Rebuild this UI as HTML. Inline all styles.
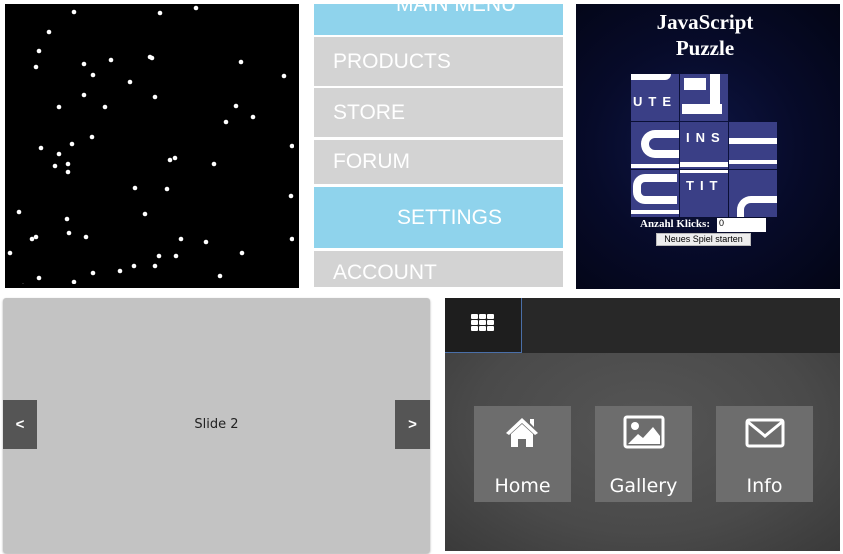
<!DOCTYPE html>
<html><head><meta charset="utf-8"><style>
*{margin:0;padding:0;box-sizing:border-box}
body{width:843px;height:554px;background:#fff;position:relative;overflow:hidden;font-family:"Liberation Sans",sans-serif}
.a{position:absolute}
.m{position:absolute;left:314px;width:249px;background:#d3d3d3;color:#fff;font-size:21px;padding-left:19px;display:flex;align-items:center}
.b{background:#8fd3ec;justify-content:center;padding-left:22px}
.t{position:absolute;width:48px;height:47px;background:#3a3f86;overflow:hidden;color:#fff;font-weight:bold;font-size:13px;letter-spacing:6px}
.tile{position:absolute;top:406px;width:97px;height:96px;background:#6d6d6d;color:#fff;font-family:"DejaVu Sans",sans-serif;font-size:19px;text-align:center}
.tile span{position:absolute;left:0;right:0;top:69px}
.tile svg{position:absolute;left:28px;top:8px}
</style></head><body>
<div class="a" style="left:5px;top:4px;width:294px;height:284px;background:#000">
<svg width="294" height="284" style="position:absolute;left:-5px;top:-4px" fill="#fff">
<g>
<circle cx="74" cy="12" r="2.3"/><circle cx="160" cy="13" r="2.3"/><circle cx="196" cy="8" r="2.3"/><circle cx="49" cy="32" r="2.3"/><circle cx="298" cy="48" r="2.3"/><circle cx="39" cy="51" r="2.3"/><circle cx="150" cy="57" r="2.3"/><circle cx="152" cy="58" r="2.3"/><circle cx="111" cy="60" r="2.3"/><circle cx="241" cy="62" r="2.3"/><circle cx="84" cy="64" r="2.3"/><circle cx="36" cy="67" r="2.3"/><circle cx="93" cy="75" r="2.3"/><circle cx="284" cy="76" r="2.3"/><circle cx="130" cy="82" r="2.3"/><circle cx="84" cy="95" r="2.3"/><circle cx="155" cy="97" r="2.3"/><circle cx="59" cy="107" r="2.3"/><circle cx="105" cy="107" r="2.3"/><circle cx="236" cy="106" r="2.3"/><circle cx="253" cy="117" r="2.3"/><circle cx="226" cy="122" r="2.3"/><circle cx="92" cy="137" r="2.3"/><circle cx="41" cy="148" r="2.3"/><circle cx="72" cy="144" r="2.3"/><circle cx="292" cy="146" r="2.3"/><circle cx="59" cy="154" r="2.3"/><circle cx="170" cy="160" r="2.3"/><circle cx="175" cy="158" r="2.3"/><circle cx="68" cy="164" r="2.3"/><circle cx="55" cy="166" r="2.3"/><circle cx="214" cy="164" r="2.3"/><circle cx="68" cy="172" r="2.3"/><circle cx="135" cy="188" r="2.3"/><circle cx="167" cy="189" r="2.3"/><circle cx="291" cy="196" r="2.3"/><circle cx="19" cy="212" r="2.3"/><circle cx="145" cy="214" r="2.3"/><circle cx="67" cy="219" r="2.3"/><circle cx="69" cy="233" r="2.3"/><circle cx="32" cy="239" r="2.3"/><circle cx="36" cy="237" r="2.3"/><circle cx="86" cy="237" r="2.3"/><circle cx="181" cy="239" r="2.3"/><circle cx="206" cy="242" r="2.3"/><circle cx="292" cy="239" r="2.3"/><circle cx="10" cy="253" r="2.3"/><circle cx="159" cy="256" r="2.3"/><circle cx="176" cy="256" r="2.3"/><circle cx="242" cy="253" r="2.3"/><circle cx="134" cy="266" r="2.3"/><circle cx="155" cy="266" r="2.3"/><circle cx="93" cy="273" r="2.3"/><circle cx="120" cy="271" r="2.3"/><circle cx="39" cy="278" r="2.3"/><circle cx="220" cy="276" r="2.3"/><circle cx="74" cy="282" r="2.3"/><circle cx="23" cy="286" r="2.3"/><circle cx="261" cy="287" r="2.3"/>
</g></svg></div>

<div class="m b" style="top:4px;height:31px;overflow:hidden;display:block"><span style="position:absolute;left:82px;top:-11px;line-height:24px">MAIN MENU</span></div>
<div class="m" style="top:37px;height:49px">PRODUCTS</div>
<div class="m" style="top:88px;height:49px">STORE</div>
<div class="m" style="top:140px;height:44px">FORUM</div>
<div class="m b" style="top:187px;height:61px">SETTINGS</div>
<div class="m" style="top:251px;height:36px;align-items:flex-end;padding-bottom:2px">ACCOUNT</div>

<div class="a" style="left:576px;top:4px;width:264px;height:285px;background:radial-gradient(ellipse at 45% 50%,#0e1645 0%,#070b2a 50%,#030515 100%)">
<div class="a" style="left:0;width:258px;top:5px;text-align:center;color:#fff;font-family:'Liberation Serif',serif;font-weight:bold;font-size:21px;line-height:26px">JavaScript<br>Puzzle</div>
<div class="t" style="left:55px;top:70px"><span style="position:absolute;left:2px;top:20px">UTE</span><div class="a" style="left:0;top:0;width:40px;height:6px;background:#fff;border-radius:0 0 8px 0"></div></div>
<div class="t" style="left:104px;top:70px"><div class="a" style="left:4px;top:4px;width:22px;height:12px;background:#fff"></div><div class="a" style="left:2px;top:30px;width:40px;height:10px;background:#fff"></div><div class="a" style="left:30px;top:0;width:10px;height:38px;background:#fff"></div></div>
<div class="t" style="left:55px;top:118px"><div class="a" style="left:10px;top:8px;width:40px;height:28px;border:8px solid #fff;border-right:none;border-radius:18px 0 0 18px"></div><div class="a" style="left:0;top:42px;width:48px;height:4px;background:#fff"></div></div>
<div class="t" style="left:104px;top:118px"><span style="position:absolute;left:6px;top:8px">INS</span><div class="a" style="left:0;top:40px;width:48px;height:5px;background:#fff"></div></div>
<div class="t" style="left:153px;top:118px"><div class="a" style="left:0;top:16px;width:48px;height:6px;background:#fff"></div><div class="a" style="left:0;top:38px;width:48px;height:4px;background:#fff"></div></div>
<div class="t" style="left:55px;top:166px"><div class="a" style="left:2px;top:4px;width:44px;height:30px;border:8px solid #fff;border-right:none;border-radius:12px 0 0 12px"></div><div class="a" style="left:0;top:40px;width:48px;height:4px;background:#fff"></div></div>
<div class="t" style="left:104px;top:166px"><span style="position:absolute;left:6px;top:8px">TIT</span><div class="a" style="left:0;top:0;width:48px;height:3px;background:#fff"></div></div>
<div class="t" style="left:153px;top:166px"><div class="a" style="left:8px;top:26px;width:50px;height:30px;border:7px solid #fff;border-right:none;border-bottom:none;border-radius:14px 0 0 0"></div></div>
<div class="a" style="left:64px;top:214px;color:#fff;font-family:'Liberation Serif',serif;font-weight:bold;font-size:11px">Anzahl Klicks:</div>
<div class="a" style="left:141px;top:214px;width:49px;height:14px;background:#fff;font-size:9px;padding-left:2px;color:#000">0</div>
<div class="a" style="left:80px;top:229px;width:95px;height:13px;background:#eee;border:1px solid #bbb;font-size:9px;text-align:center;line-height:11px;color:#000">Neues Spiel starten</div>
</div>

<div class="a" style="left:3px;top:298px;width:427px;height:255px;background:#c3c3c3;border-radius:3px;box-shadow:0 1px 2px #aaa">
<div class="a" style="left:0;right:0;top:119px;text-align:center;font-family:'DejaVu Sans',sans-serif;font-size:13px;color:#222">Slide 2</div>
<div class="a" style="left:0;top:102px;width:34px;height:49px;background:#555;color:#fff;font-weight:bold;font-size:15px;text-align:center;line-height:49px">&lt;</div>
<div class="a" style="left:392px;top:102px;width:35px;height:49px;background:#555;color:#fff;font-weight:bold;font-size:15px;text-align:center;line-height:49px">&gt;</div>
</div>

<div class="a" style="left:445px;top:298px;width:395px;height:253px;background:radial-gradient(ellipse at 50% 50%,#555 0%,#4a4a4a 60%,#3a3a3a 100%)">
<div class="a" style="left:0;top:0;width:395px;height:55px;background:#282828"></div>
<div class="a" style="left:0;top:0;width:77px;height:55px;background:#1e1e1e;border-right:1px solid #4a6fa8;border-bottom:1px solid #4a6fa8"></div>
<svg class="a" style="left:26px;top:16px" width="24" height="18" fill="#fff"><rect x="0" y="0" width="7" height="5" rx="1"/><rect x="8" y="0" width="7" height="5" rx="1"/><rect x="16" y="0" width="7" height="5" rx="1"/><rect x="0" y="6" width="7" height="5" rx="1"/><rect x="8" y="6" width="7" height="5" rx="1"/><rect x="16" y="6" width="7" height="5" rx="1"/><rect x="0" y="12" width="7" height="5" rx="1"/><rect x="8" y="12" width="7" height="5" rx="1"/><rect x="16" y="12" width="7" height="5" rx="1"/></svg>
</div>
<div class="tile" style="left:474px"><svg width="40" height="36" viewBox="0 0 40 36"><path d="M20 4 L36 19 L33 21 L20 9 L7 21 L4 19 Z M28 5 h4 v8 l-4-4Z" fill="#fff"/><path d="M9 20 L20 10 L31 20 V33 H24 V25 H16 V33 H9Z" fill="#fff"/></svg><span>Home</span></div>
<div class="tile" style="left:595px"><svg width="42" height="36" viewBox="0 0 42 36"><rect x="2" y="3" width="38" height="30" fill="none" stroke="#fff" stroke-width="3" rx="2"/><circle cx="12" cy="12" r="4" fill="#fff"/><path d="M5 30 L15 20 L20 24 L30 13 L37 22 V30Z" fill="#fff"/></svg><span>Gallery</span></div>
<div class="tile" style="left:716px"><svg width="42" height="36" viewBox="0 0 42 36"><rect x="3" y="6" width="36" height="26" fill="none" stroke="#fff" stroke-width="3" rx="2"/><path d="M4 8 L21 22 L38 8" fill="none" stroke="#fff" stroke-width="3"/></svg><span>Info</span></div>
</body></html>
